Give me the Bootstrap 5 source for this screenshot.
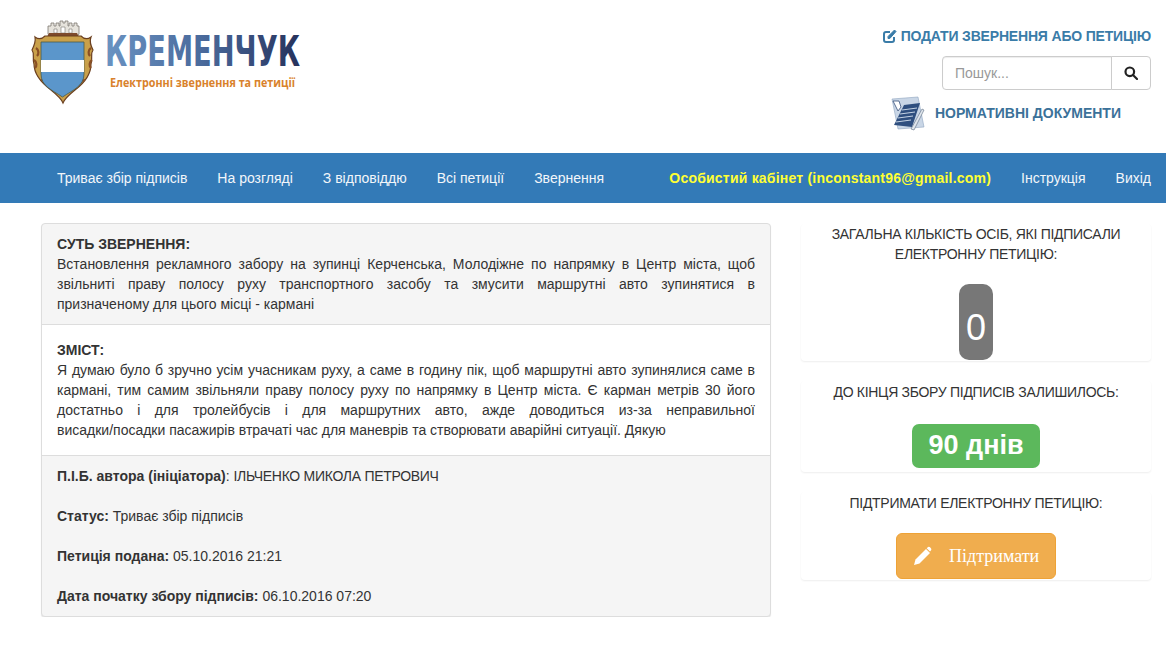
<!DOCTYPE html>
<html lang="uk">
<head>
  <meta charset="UTF-8" />
  <meta name="viewport" content="width=device-width, initial-scale=1">
  <title>Кременчук - Електронні звернення та петиції</title>
  <link href="https://cdn.jsdelivr.net/npm/bootstrap@5.3.3/dist/css/bootstrap.min.css" rel="stylesheet">
  <style>
    body { font-family: "Liberation Sans", Arial, sans-serif; font-size: 14px; line-height: 20px; color: #333; background: #fff; }
    .site-head { height: 153px; padding: 0 15px 0 25px; }
    .site-logo { width: 290px; height: 90px; margin-top: 18px; overflow: visible; }
    .head-side { width: 300px; padding-top: 26px; }
    .submit-link { color: #3a7ca8; font-weight: 700; text-decoration: none; height: 20px; letter-spacing: -.18px; }
    .search-box { width: 209px; height: 34px; margin-top: 10px; }
    .search-box .form-control { font-size: 14px; height: 34px; padding: 6px 12px; color: #999; border-color: #ccc; border-radius: 4px 0 0 4px; box-shadow: inset 0 1px 1px rgba(0,0,0,.075); }
    .search-box .form-control::placeholder { color: #999; }
    .search-box .btn { width: 40px; height: 34px; padding: 0; border-color: #ccc; border-radius: 0 4px 4px 0; background: #fff; }
    .docs-link { color: #3b7199; font-weight: 700; text-decoration: none; margin: 5px 30px 0 0; gap: 9px; }
    .main-bar { background: #337ab7; height: 50px; padding: 0 15px 0 42px; }
    .main-bar .nav-link { color: #f2f6fa; padding: 15px; line-height: 20px; font-size: 14px; }
    .main-bar .nav-link.cabinet { color: #ffff33; font-weight: 700; letter-spacing: .21px; }
    .main-bar .nav-item:last-child .nav-link { padding-right: 0; }
    .page-wrap { padding: 20px 15px 0 41px; gap: 30px; }
    .petition-box { width: 730px; height: 394px; border-color: #ddd; border-radius: 4px; box-shadow: 0 1px 1px rgba(0,0,0,.1); background: #f5f5f5; }
    .petition-box > div { padding: 15px; }
    .petition-box .sec-top { padding-top: 10px; height: 101px; border-bottom: 1px solid #ddd; }
    .petition-box .sec-mid { background: #fff; height: 131px; border-bottom: 1px solid #ddd; }
    .petition-box .sec-foot { padding-top: 10px; padding-bottom: 10px; }
    .just-line { display: block; text-align: justify; text-align-last: justify; }
    .upper-name { letter-spacing: -.29px; }
    .sec-foot p { margin: 0 0 20px; }
    .sec-foot p:last-child { margin: 0; }
    .side-col { width: 350px; padding-top: 1px; }
    .side-panel { box-shadow: 0 1px 2px rgba(0,0,0,.07); border-radius: 4px; text-align: center; }
    .side-title { letter-spacing: -.29px; }
    .panel-one { height: 137px; margin-bottom: 20px; }
    .panel-two { height: 91px; margin-bottom: 20px; padding-top: 1px; }
    .panel-three { height: 88px; padding-top: 1px; }
    .count-pill { width: 34px; height: 76px; margin-top: 20px; border-radius: 10px; background: #777; color: #fff; font-size: 36px; line-height: 88px; }
    .days-pill { width: 128px; height: 44px; margin-top: 22px; border-radius: 7px; background: #5cb85c; color: #fff; font-size: 27px; font-weight: 700; line-height: 42px; }
    .support-btn { width: 160px; height: 46px; margin-top: 20px; padding: 0 0 0 16px; border-radius: 6px; background: #f0ad4e; border: 1px solid #eea236; color: #fff; font-family: "Liberation Serif", "Times New Roman", serif; font-size: 18px; gap: 16px; }
  </style>
</head>
<body>

  <!-- Шапка -->
  <header class="site-head d-flex justify-content-between align-items-start">
    <svg class="site-logo" viewBox="0 0 290 90" role="img" aria-label="Кременчук">
      <defs>
        <linearGradient id="logoText" x1="0" x2="1" y1="0" y2="0">
          <stop offset="0" stop-color="#6a93c2"/>
          <stop offset=".5" stop-color="#4a6a9c"/>
          <stop offset="1" stop-color="#26325c"/>
        </linearGradient>
      </defs>
      <!-- вежі -->
      <path d="M23 16v-8h3v-3h3v3h2v-3h3v3h1V3h3v2h2V3h3v5h1V5h3v3h2V5h3v3h2v8l-3 4H26z" fill="#e6e3dc" stroke="#7b776f" stroke-width=".8"/>
      <path d="M29 11h3v4h-3zM36 9h4v6h-4zM44 11h3v4h-3z" fill="#fff" stroke="#7b776f" stroke-width=".6"/>
      <path d="M24 15h28l2 4H22z" fill="#7d4a2c"/>
      <!-- щит -->
      <path d="M10 19c4 3 8 1 10-1h36c2 2 6 4 10 1-2 5 0 9 2 13-3 4 0 8-2 14 0 12-8 20-16 26-5 4-10 8-12 13-2-5-7-9-12-13-8-6-17-14-17-26-2-6 1-10-2-14 2-4 4-8 3-13z" fill="#c9a04a" stroke="#6b3f1f" stroke-width="1.200"/>
      <path d="M11 30c3 2 3 6 1 8M9 42c3 2 3 6 1 8M66 30c-3 2-3 6-1 8M67 42c-3 2-3 6-1 8M16 62c3 0 5 3 6 6M60 62c-3 0-5 3-6 6" fill="none" stroke="#8a4f24" stroke-width="2.200"/>
      <path d="M16 24h43v32c0 12-11 16-21.500 23C27 72 16 68 16 56z" fill="#5b96cb" stroke="#4a5a4a" stroke-width=".8"/>
      <path d="M16 42h43v12H16z" fill="#fff"/>
      <text x="80" y="48" font-family="DejaVu Sans, Liberation Sans, sans-serif" font-weight="700" font-size="42" textLength="195" lengthAdjust="spacingAndGlyphs" fill="url(#logoText)">КРЕМЕНЧУК</text>
      <text x="85" y="69" font-family="Open Sans, Liberation Sans, sans-serif" font-weight="700" font-size="11.500" textLength="185" lengthAdjust="spacingAndGlyphs" fill="#d9822b">Електронні звернення та петиції</text>
    </svg>

    <div class="head-side d-flex flex-column align-items-end">
      <a href="#" class="submit-link d-flex align-items-center gap-1">
        <svg width="14" height="14" viewBox="0 0 14 14" fill="none" stroke="#3a7ca8" stroke-width="2"><path d="M11 8v3a2 2 0 0 1-2 2H3a2 2 0 0 1-2-2V5a2 2 0 0 1 2-2h4"/><path d="M5 9.500V7.500L11.500 1 13 2.500 6.800 9.500z" fill="#3a7ca8" stroke-width="1"/></svg>
        ПОДАТИ ЗВЕРНЕННЯ АБО ПЕТИЦІЮ
      </a>
      <div class="input-group search-box">
        <input type="text" class="form-control" placeholder="Пошук...">
        <button class="btn d-flex align-items-center justify-content-center" type="button" aria-label="Пошук">
          <svg width="14" height="14" viewBox="0 0 14 14" fill="none" stroke="#222" stroke-width="2.200"><circle cx="5.800" cy="5.800" r="4.300"/><path d="M9 9l4 4" stroke-linecap="round"/></svg>
        </button>
      </div>
      <a href="#" class="docs-link d-flex align-items-center">
        <svg width="36" height="36" viewBox="0 0 36 36">
          <path d="M2 4l26-2 6 30-26 2z" fill="#c9d6e6" stroke="#8fa5bf" stroke-width=".6"/>
          <path d="M4 30L14 10l16-2-8 24z" fill="#2f4f7f"/>
          <path d="M12 15l15-2M10 19l15-2M8 23l15-2M6 27l15-2" stroke="#c5d3e4" stroke-width="1"/>
          <path d="M3 6l6 0 2 6-3 4z" fill="#fff" stroke="#39507a" stroke-width=".8"/>
          <path d="M21 34l11-20 2 1-10 20z" fill="#dfe5ec" stroke="#5a6b82" stroke-width=".6"/>
        </svg>
        НОРМАТИВНІ ДОКУМЕНТИ
      </a>
    </div>
  </header>

  <!-- Меню -->
  <nav class="main-bar d-flex justify-content-between">
    <ul class="nav">
      <li class="nav-item"><a class="nav-link" href="#">Триває збір підписів</a></li>
      <li class="nav-item"><a class="nav-link" href="#">На розгляді</a></li>
      <li class="nav-item"><a class="nav-link" href="#">З відповіддю</a></li>
      <li class="nav-item"><a class="nav-link" href="#">Всі петиції</a></li>
      <li class="nav-item"><a class="nav-link" href="#">Звернення</a></li>
    </ul>
    <ul class="nav">
      <li class="nav-item"><a class="nav-link cabinet" href="#">Особистий кабінет (inconstant96@gmail.com)</a></li>
      <li class="nav-item"><a class="nav-link" href="#">Інструкція</a></li>
      <li class="nav-item"><a class="nav-link" href="#">Вихід</a></li>
    </ul>
  </nav>

  <main class="page-wrap d-flex align-items-start">
    <div class="petition-box card d-block overflow-hidden">
      <div class="sec-top">
        <b>СУТЬ ЗВЕРНЕННЯ:</b><br>
        <span class="just-line">Встановлення рекламного забору на зупинці Керченська, Молодіжне по напрямку в Центр міста, щоб</span>
        <span class="just-line">звільниті праву полосу руху транспортного засобу та змусити маршрутні авто зупинятися в</span>
        призначеному для цього місці - кармані
      </div>
      <div class="sec-mid">
        <b>ЗМІСТ:</b><br>
        <span class="just-line">Я думаю було б зручно усім учасникам руху, а саме в годину пік, щоб маршрутні авто зупинялися саме в</span>
        <span class="just-line">кармані, тим самим звільняли праву полосу руху по напрямку в Центр міста. Є карман метрів 30 його</span>
        <span class="just-line">достатньо і для тролейбусів і для маршрутних авто, ажде доводиться из-за неправильної</span>
        висадки/посадки пасажирів втрачаті час для маневрів та створювати аварійні ситуації. Дякую
      </div>
      <div class="sec-foot">
        <p><b>П.І.Б. автора (ініціатора)</b>: <span class="upper-name">ІЛЬЧЕНКО МИКОЛА ПЕТРОВИЧ</span></p>
        <p><b>Статус:</b> Триває збір підписів</p>
        <p><b>Петиція подана:</b> 05.10.2016 21:21</p>
        <p><b>Дата початку збору підписів:</b> 06.10.2016 07:20</p>
      </div>
    </div>

    <aside class="side-col">
      <div class="side-panel panel-one">
        <div class="side-title">ЗАГАЛЬНА КІЛЬКІСТЬ ОСІБ, ЯКІ ПІДПИСАЛИ<br>ЕЛЕКТРОННУ ПЕТИЦІЮ:</div>
        <div class="count-pill mx-auto">0</div>
      </div>
      <div class="side-panel panel-two">
        <div class="side-title">ДО КІНЦЯ ЗБОРУ ПІДПИСІВ ЗАЛИШИЛОСЬ:</div>
        <div class="days-pill mx-auto">90 днів</div>
      </div>
      <div class="side-panel panel-three">
        <div class="side-title">ПІДТРИМАТИ ЕЛЕКТРОННУ ПЕТИЦІЮ:</div>
        <button class="btn support-btn d-inline-flex align-items-center" type="button">
          <svg width="20" height="20" viewBox="0 0 20 20" fill="#fff"><path d="M1 19l1.500-5.500L13 3l4 4L6.500 17.500z"/><path d="M14.500 1.500c1-1 2-.8 3 .2s1.200 2 .2 3L17 5.500 13.700 2.200z"/></svg>
          Підтримати
        </button>
      </div>
    </aside>
  </main>

  <script src="https://cdn.jsdelivr.net/npm/bootstrap@5.3.3/dist/js/bootstrap.bundle.min.js"></script>
</body>
</html>
